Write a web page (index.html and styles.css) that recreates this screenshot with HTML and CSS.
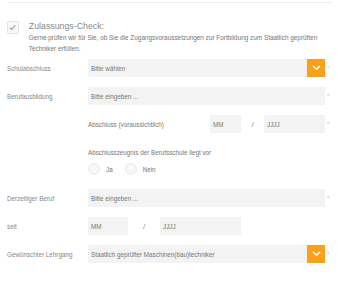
FILE: index.html
```html
<!DOCTYPE html>
<html lang="de">
<head>
    <meta charset="UTF-8">
    <title>Zulassungs-Check</title>
    <link rel="stylesheet" href="styles.css">
</head>
<body>
    <div class="check-form">
        <div class="intro">
            <span class="check-box">
                <svg width="9" height="9" viewBox="0 0 10 10" fill="none" stroke="#a5a5a5" stroke-width="1.3" stroke-linecap="round" stroke-linejoin="round">
                    <polyline points="2.5 5.5 4.3 7.2 7.8 3"></polyline>
                </svg>
            </span>
            <div class="intro-text">
                <h2>Zulassungs-Check:</h2>
                <p>Gerne prüfen wir für Sie, ob Sie die Zugangsvoraussetzungen zur Fortbildung zum Staatlich geprüften Techniker erfüllen.</p>
            </div>
        </div>

        <div class="form-row">
            <label>Schulabschluss</label>
            <div class="select">
                <span>Bitte wählen</span>
                <span class="select-btn">
                    <svg width="9" height="6" viewBox="0 0 10 6" fill="none" stroke="#fff" stroke-width="1.5" stroke-linecap="round" stroke-linejoin="round">
                        <polyline points="1.5 1 5 4.5 8.5 1"></polyline>
                    </svg>
                </span>
            </div>
            <span class="req">*</span>
        </div>

        <div class="form-row">
            <label>Berufausbildung</label>
            <div class="field">Bitte eingeben ...</div>
            <span class="req">*</span>
        </div>

        <div class="form-row">
            <span></span>
            <div class="date-row end">
                <span class="sub-label">Abschluss (voraussichtlich)</span>
                <div class="field mm">MM</div>
                <span class="slash">/</span>
                <div class="field yyyy">JJJJ</div>
            </div>
            <span class="req">*</span>
        </div>

        <div class="form-row radio-block">
            <span></span>
            <div>
                <p class="sub-label">Abschlusszeugnis der Berufsschule liegt vor</p>
                <div class="radios">
                    <span class="radio"></span><span class="radio-text">Ja</span>
                    <span class="radio"></span><span class="radio-text">Nein</span>
                </div>
            </div>
        </div>

        <div class="form-row">
            <label>Derzeitiger Beruf</label>
            <div class="field">Bitte eingeben ...</div>
            <span class="req">*</span>
        </div>

        <div class="form-row">
            <label>seit</label>
            <div class="date-row">
                <div class="field mm wide">MM</div>
                <span class="slash wide">/</span>
                <div class="field yyyy wide">JJJJ</div>
            </div>
        </div>

        <div class="form-row">
            <label>Gewünschter Lehrgang</label>
            <div class="select">
                <span>Staatlich geprüfter Maschinen(bau)techniker</span>
                <span class="select-btn">
                    <svg width="9" height="6" viewBox="0 0 10 6" fill="none" stroke="#fff" stroke-width="1.5" stroke-linecap="round" stroke-linejoin="round">
                        <polyline points="1.5 1 5 4.5 8.5 1"></polyline>
                    </svg>
                </span>
            </div>
            <span class="req">*</span>
        </div>
    </div>
</body>
</html>
```

FILE: styles.css
```css
* {
    margin: 0;
    padding: 0;
    box-sizing: border-box;
    font-family: 'Liberation Sans', Arial, sans-serif;
}

body {
    background-color: #fff;
    color: #777;
}

.check-form {
    margin: 2px 7px 0 8px;
    padding: 17px 0 13px;
    border-top: 1px solid #eee;
    border-bottom: 1px solid #eee;
}

.intro {
    display: flex;
    align-items: flex-start;
    margin-left: -1px;
    margin-bottom: 5px;
}

.check-box {
    width: 13px;
    height: 13px;
    margin-top: 1px;
    border: 1px solid #e4e4e4;
    border-radius: 2px;
    background-color: #f8f8f8;
    display: flex;
    align-items: center;
    justify-content: center;
}

.intro-text {
    margin-left: 10px;
}

.intro-text h2 {
    font-size: 8.8px;
    font-weight: normal;
    color: #888;
    line-height: 12px;
}

.intro-text p {
    font-size: 6.4px;
    line-height: 11px;
    color: #777;
}

.form-row {
    display: grid;
    grid-template-columns: 80px 237px 1fr;
    align-items: center;
    height: 18px;
    margin-bottom: 10px;
    font-size: 6.3px;
}

.form-row label {
    color: #888;
    margin-left: -1px;
}

.field,
.select {
    height: 18px;
    background-color: #f3f3f3;
    color: #777;
    display: flex;
    align-items: center;
    padding-left: 3px;
}

.select {
    justify-content: space-between;
}

.select-btn {
    width: 18px;
    height: 18px;
    background-color: #f9a11b;
    display: flex;
    align-items: center;
    justify-content: center;
}

.req {
    color: #bbb;
    font-size: 6px;
    padding-left: 2px;
}

.date-row {
    display: flex;
    align-items: center;
    height: 18px;
}

.date-row.end .sub-label {
    flex: 1;
}

.mm {
    width: 31px;
}

.slash {
    width: 23px;
    text-align: center;
    color: #999;
    font-size: 8px;
}

.yyyy {
    width: 61px;
}

.mm.wide {
    width: 40px;
}

.slash.wide {
    width: 32px;
}

.yyyy.wide {
    width: 81px;
}

.sub-label {
    color: #777;
}

.radio-block {
    height: auto;
    margin-top: 15px;
    margin-bottom: 14px;
    align-items: start;
}

.radio-block .sub-label {
    line-height: 9px;
}

.radios {
    display: flex;
    align-items: center;
    margin-top: 6px;
}

.radio {
    width: 12px;
    height: 12px;
    border-radius: 50%;
    border: 1px solid #ededed;
    background: radial-gradient(circle at 50% 50%, #f8f8f8 40%, #efefef 100%);
}

.radio-text {
    margin-left: 6px;
    margin-right: 12px;
    color: #777;
}
```
